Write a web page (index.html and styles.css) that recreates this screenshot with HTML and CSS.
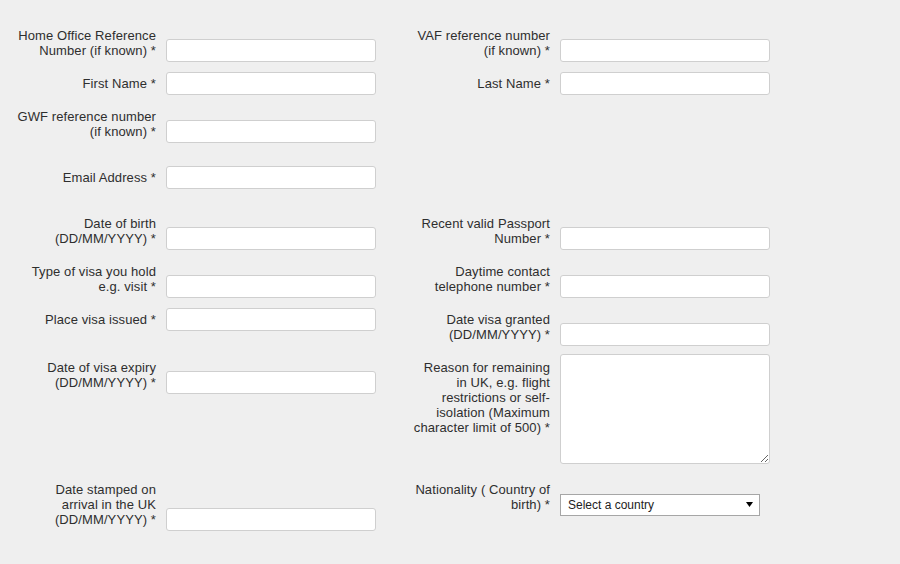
FILE: index.html
```html
<!DOCTYPE html>
<html lang="en">
<head>
<meta charset="utf-8">
<title>Application form</title>
<link rel="stylesheet" href="styles.css">
</head>
<body>
<form class="form">
  <div class="field"><label class="label">Home Office Reference Number (if known) *</label><input class="input" type="text"></div>
  <div class="field"><label class="label">VAF reference number (if known) *</label><input class="input" type="text"></div>

  <div class="field"><label class="label">First Name *</label><input class="input" type="text"></div>
  <div class="field"><label class="label">Last Name *</label><input class="input" type="text"></div>

  <div class="field"><label class="label">GWF reference number (if known) *</label><input class="input" type="text"></div>
  <div class="field empty"></div>

  <div class="field"><label class="label">Email Address *</label><input class="input" type="text"></div>
  <div class="field empty"></div>

  <div class="field"><label class="label">Date of birth (DD/MM/YYYY) *</label><input class="input" type="text"></div>
  <div class="field"><label class="label">Recent valid Passport Number *</label><input class="input" type="text"></div>

  <div class="field"><label class="label">Type of visa you hold e.g. visit *</label><input class="input" type="text"></div>
  <div class="field"><label class="label">Daytime contact telephone number *</label><input class="input" type="text"></div>

  <div class="field"><label class="label">Place visa issued *</label><input class="input" type="text"></div>
  <div class="field"><label class="label">Date visa granted (DD/MM/YYYY) *</label><input class="input" type="text"></div>

  <div class="field"><label class="label">Date of visa expiry (DD/MM/YYYY) *</label><input class="input" type="text"></div>
  <div class="field field-top"><label class="label">Reason for remaining in UK, e.g. flight restrictions or self-isolation (Maximum character limit of 500) *</label><textarea class="textarea"></textarea></div>

  <div class="field"><label class="label">Date stamped on arrival in the UK (DD/MM/YYYY) *</label><input class="input" type="text"></div>
  <div class="field"><label class="label">Nationality ( Country of birth) *</label>
    <div class="select-wrap">
      <select class="select"><option>Select a country</option></select>
      <svg class="select-arrow" width="7" height="5" viewBox="0 0 7 5"><path d="M0 0H7L3.5 5Z" fill="#000"/></svg>
    </div>
  </div>
</form>
</body>
</html>
```

FILE: styles.css
```css
html, body {
  margin: 0;
  padding: 0;
  background: #efefef;
}

body {
  font-family: "Liberation Sans", Arial, sans-serif;
  font-size: 13px;
  line-height: 15px;
  color: #2e2e2e;
  width: 900px;
  height: 564px;
  overflow: hidden;
}

.form {
  display: grid;
  grid-template-columns: 394px 394px;
  grid-template-rows: 48px 33px 61px 46px 48px 48px 48px 122px auto;
  align-items: start;
  padding: 27.5px 0 0 17px;
}

.field {
  display: flex;
  align-items: flex-end;
}

.field-top {
  align-items: flex-start;
}

.label {
  width: 139px;
  flex: none;
  text-align: right;
  margin-right: 10px;
  letter-spacing: 0.1px;
}

.input {
  box-sizing: border-box;
  width: 210px;
  height: 23px;
  margin: -4px 0;
  padding: 3px 6px;
  border: 1px solid #cfcfcf;
  border-radius: 3px;
  background: #fff;
  font: 13px/15px "Liberation Sans", Arial, sans-serif;
  color: #333;
  outline: none;
}

.textarea {
  box-sizing: border-box;
  width: 210px;
  height: 110px;
  margin: -6px 0 0 0;
  padding: 3px 6px;
  border: 1px solid #cfcfcf;
  border-radius: 3px;
  background: #fff;
  font: 13px/15px "Liberation Sans", Arial, sans-serif;
  outline: none;
}

.select-wrap {
  position: relative;
  width: 200px;
  height: 22px;
  margin: -4px 0;
}

.select {
  -webkit-appearance: none;
  appearance: none;
  box-sizing: border-box;
  width: 200px;
  height: 22px;
  margin: 0;
  padding: 0 0 0 7px;
  border: 1px solid #a6a6a6;
  border-radius: 0;
  background: #fff;
  font: 12px/20px "Liberation Sans", Arial, sans-serif;
  color: #222;
  outline: none;
}

.select-arrow {
  position: absolute;
  right: 7px;
  top: 8px;
  pointer-events: none;
}
```
